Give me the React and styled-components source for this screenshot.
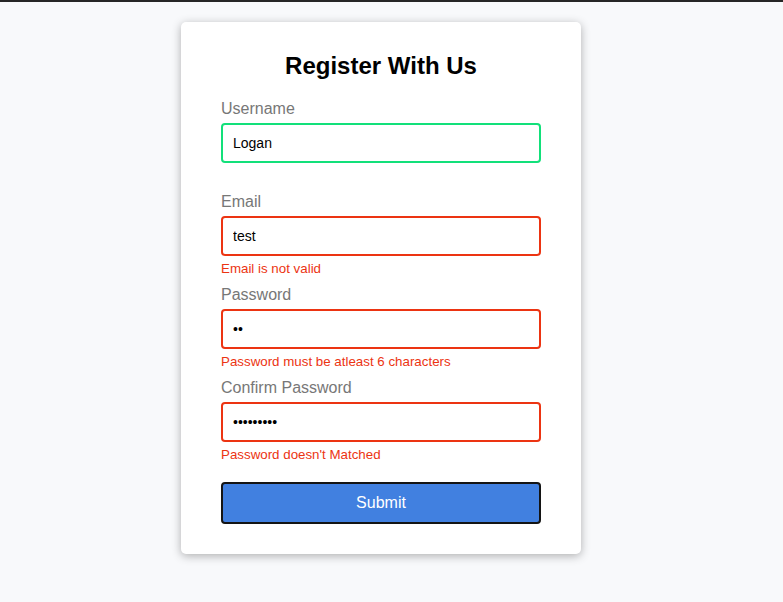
import React from "react";
import styled, { createGlobalStyle } from "styled-components";

const Global = createGlobalStyle`
  * { box-sizing: border-box; }
  html, body { margin: 0; padding: 0; }
  body {
    background: #f8f9fb;
    font-family: "Liberation Sans", Arial, sans-serif;
    border-top: 2px solid #262626;
    min-height: 602px;
  }
`;

const Page = styled.div`
  display: flex;
  justify-content: center;
  padding: 20px 21px 40px 0;
`;

const Card = styled.div`
  background: #fff;
  border-radius: 5px;
  box-shadow: 0 2px 10px rgba(0, 0, 0, 0.3);
  width: 400px;
`;

const Form = styled.form`
  padding: 30px 40px;
`;

const Title = styled.h2`
  text-align: center;
  margin: 0 0 20px;
  font-size: 24px;
  line-height: 28px;
  font-weight: bold;
  color: #000;
`;

const Field = styled.div`
  position: relative;
  margin-bottom: 10px;
  padding-bottom: 20px;
`;

const Label = styled.label`
  display: block;
  color: #777;
  font-size: 16px;
  line-height: 18px;
  margin-bottom: 5px;
`;

const Input = styled.input`
  display: block;
  width: 100%;
  height: 40px;
  padding: 10px;
  font-size: 14px;
  font-family: "Liberation Sans", Arial, sans-serif;
  color: #000;
  border-radius: 4px;
  outline: none;
  border: 2px solid ${(p) => (p.$state === "success" ? "#12e07a" : p.$state === "error" ? "#ec3412" : "#f0f0f0")};
`;

const ErrorText = styled.small`
  position: absolute;
  left: 0;
  bottom: 0;
  font-size: 13.33px;
  color: #ec3412;
`;

const Button = styled.button`
  display: block;
  width: 100%;
  margin-top: 20px;
  padding: 10px;
  height: 42px;
  background: #4180e0;
  border: 2px solid #141414;
  border-radius: 4px;
  color: #fff;
  font-size: 16px;
  font-family: "Liberation Sans", Arial, sans-serif;
  cursor: pointer;
`;

const fields = [
  { label: "Username", type: "text", value: "Logan", state: "success" },
  { label: "Email", type: "text", value: "test", state: "error", error: "Email is not valid" },
  { label: "Password", type: "password", value: "ab", state: "error", error: "Password must be atleast 6 characters" },
  { label: "Confirm Password", type: "password", value: "abcdefghi", state: "error", error: "Password doesn't Matched" },
];

export default function App() {
  return (
    <>
      <Global />
      <Page>
        <Card>
          <Form onSubmit={(e) => e.preventDefault()}>
            <Title>Register With Us</Title>
            {fields.map((f) => (
              <Field key={f.label}>
                <Label>{f.label}</Label>
                <Input type={f.type} defaultValue={f.value} $state={f.state} />
                {f.error && <ErrorText>{f.error}</ErrorText>}
              </Field>
            ))}
            <Button type="submit">Submit</Button>
          </Form>
        </Card>
      </Page>
    </>
  );
}
